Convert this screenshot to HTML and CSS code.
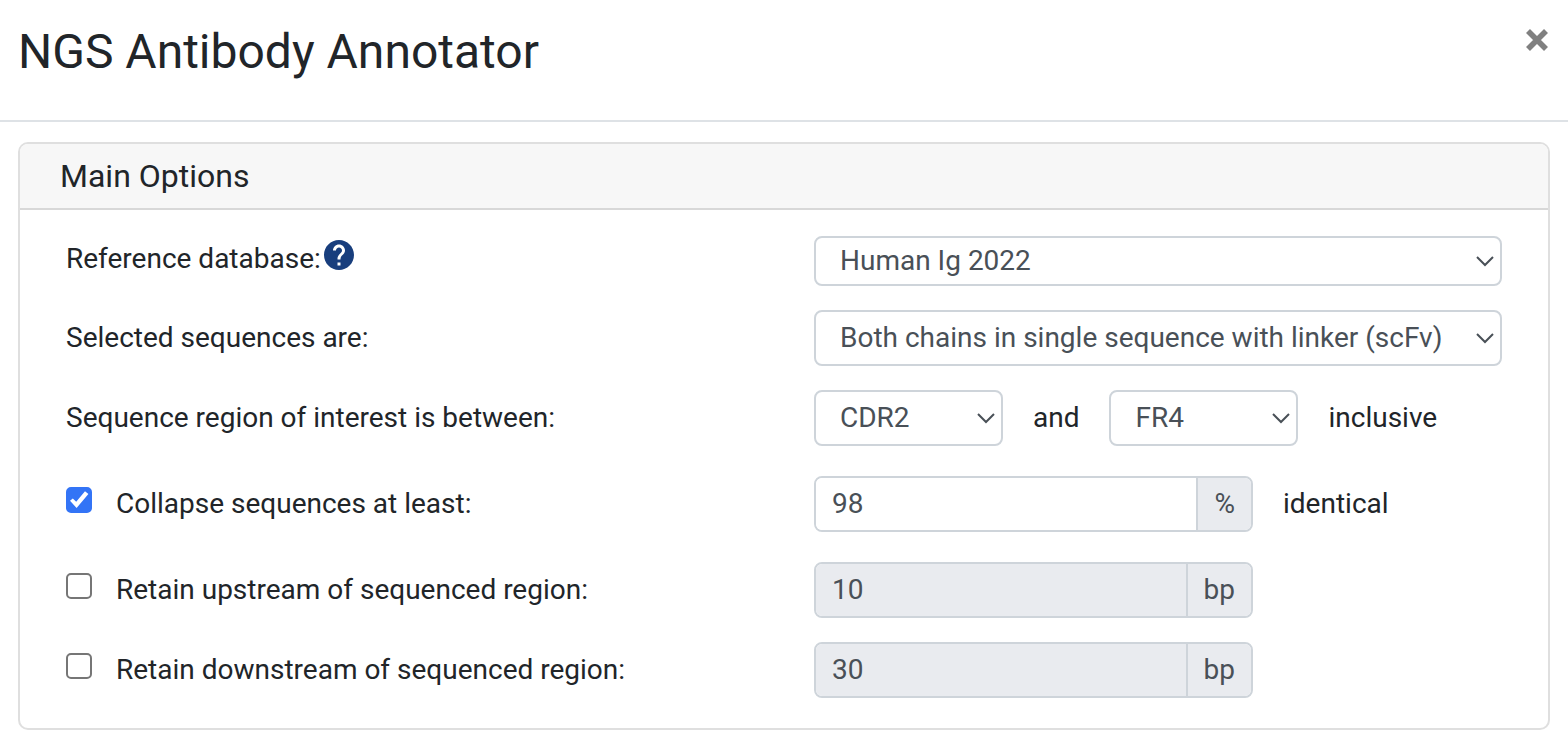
FILE: index.html
```html
<!DOCTYPE html>
<html lang="en">
<head>
    <meta charset="UTF-8">
    <meta name="viewport" content="width=device-width, initial-scale=1.0">
    <title>NGS Antibody Annotator</title>
    <link rel="stylesheet" href="styles.css">
</head>
<body>
    <header class="modal-header">
        <h1>NGS Antibody Annotator</h1>
        <button type="button" class="close" aria-label="Close">
            <svg viewBox="0 0 24 24" width="24" height="24" aria-hidden="true">
                <path d="M3 3L21 21M21 3L3 21" stroke="currentColor" stroke-width="5.6"/>
            </svg>
        </button>
    </header>

    <form class="card">
        <h2 class="card-header">Main Options</h2>
        <div class="card-body">
            <div class="form-row compact">
                <div class="label-col">
                    <label for="database">Reference database:</label>
                    <button type="button" class="help" aria-label="Help">
                        <svg viewBox="2 2 20 20" width="30" height="30" aria-hidden="true">
                            <path fill="currentColor" d="M12 2C6.48 2 2 6.48 2 12s4.48 10 10 10 10-4.480 10-10S17.520 2 12 2zm1 17h-2v-2h2v2zm2.070-7.750l-.9.920C13.450 12.900 13 13.500 13 15h-2v-.5c0-1.100.45-2.100 1.170-2.830l1.240-1.260c.37-.36.59-.86.59-1.410 0-1.100-.9-2-2-2s-2 .9-2 2H8c0-2.210 1.790-4 4-4s4 1.790 4 4c0 .88-.36 1.680-.93 2.250z"/>
                        </svg>
                    </button>
                </div>
                <div class="select-wrap">
                    <select id="database">
                        <option>Human Ig 2022</option>
                    </select>
                    <svg class="chevron" viewBox="0 0 18 11" aria-hidden="true"><path d="M1 1L9 9L17 1"/></svg>
                </div>
            </div>

            <div class="form-row">
                <label for="chains">Selected sequences are:</label>
                <div class="select-wrap">
                    <select id="chains">
                        <option>Both chains in single sequence with linker (scFv)</option>
                    </select>
                    <svg class="chevron" viewBox="0 0 18 11" aria-hidden="true"><path d="M1 1L9 9L17 1"/></svg>
                </div>
            </div>

            <div class="form-row">
                <label for="regionStart">Sequence region of interest is between:</label>
                <div class="inline-fields">
                    <div class="select-wrap short">
                        <select id="regionStart">
                            <option>CDR2</option>
                        </select>
                        <svg class="chevron" viewBox="0 0 18 11" aria-hidden="true"><path d="M1 1L9 9L17 1"/></svg>
                    </div>
                    <label for="regionEnd">and</label>
                    <div class="select-wrap short">
                        <select id="regionEnd">
                            <option>FR4</option>
                        </select>
                        <svg class="chevron" viewBox="0 0 18 11" aria-hidden="true"><path d="M1 1L9 9L17 1"/></svg>
                    </div>
                    <span>inclusive</span>
                </div>
            </div>

            <div class="form-row spaced">
                <div class="check-col">
                    <input type="checkbox" id="collapse" checked>
                    <label for="collapse">Collapse sequences at least:</label>
                </div>
                <div class="inline-fields">
                    <div class="input-group">
                        <input type="text" value="98" aria-label="Percent identical">
                        <span class="unit">%</span>
                    </div>
                    <span>identical</span>
                </div>
            </div>

            <div class="form-row spaced">
                <div class="check-col">
                    <input type="checkbox" id="upstream">
                    <label for="upstream">Retain upstream of sequenced region:</label>
                </div>
                <div class="input-group">
                    <input type="text" value="10" aria-label="Upstream bp" disabled>
                    <span class="unit">bp</span>
                </div>
            </div>

            <div class="form-row">
                <div class="check-col">
                    <input type="checkbox" id="downstream">
                    <label for="downstream">Retain downstream of sequenced region:</label>
                </div>
                <div class="input-group">
                    <input type="text" value="30" aria-label="Downstream bp" disabled>
                    <span class="unit">bp</span>
                </div>
            </div>
        </div>
    </form>
</body>
</html>
```
FILE: styles.css
```css
* {
    box-sizing: border-box;
}
body {
    margin: 0;
    background: #fff;
    color: #212529;
    font-family: Roboto, sans-serif;
    font-size: 28px;
    line-height: 42px;
}
h1, h2 {
    margin: 0;
    font-weight: 400;
}
button {
    padding: 0;
    border: none;
    background: none;
    cursor: pointer;
}
svg {
    display: block;
}
.modal-header {
    display: flex;
    justify-content: space-between;
    align-items: flex-start;
    padding: 16px 19px 32px 18px;
    border-bottom: 2px solid #dee2e6;
}
h1 {
    font-size: 48px;
    line-height: 72px;
}
.close {
    margin-top: 12px;
    color: #808080;
}
.card {
    margin: 20px 18px 10px;
    border: 2px solid #dfdfdf;
    border-radius: 10px;
    overflow: hidden;
}
.card-header {
    padding: 8px 40px;
    background: #f7f7f7;
    border-bottom: 2px solid #d8d8d8;
    font-size: 32px;
    line-height: 48px;
}
.card-body {
    padding: 26px 46px 30px;
}
.form-row {
    display: grid;
    grid-template-columns: 1fr 1fr;
    column-gap: 60px;
    align-items: center;
}
.form-row + .form-row {
    margin-top: 24px;
}
.form-row + .spaced {
    margin-top: 30px;
}
.label-col {
    display: flex;
    align-self: start;
    gap: 3px;
    line-height: 46px;
}
.help {
    margin-top: 4px;
    height: 30px;
    color: #183e7d;
}
.check-col {
    display: flex;
    gap: 24px;
}
.check-col input {
    appearance: none;
    display: grid;
    place-items: center;
    width: 26px;
    height: 26px;
    margin: 4px 0 0;
    border: 2px solid #767676;
    border-radius: 5px;
    background: #fff;
}
.check-col input:checked {
    border-color: #3374f6;
    background: #3374f6;
}
.check-col input:checked::before {
    content: "";
    width: 20px;
    height: 18px;
    background: #fff;
    clip-path: polygon(5% 54%, 19% 41%, 36% 60%, 80% 2%, 97% 16%, 38% 94%);
}
.select-wrap {
    position: relative;
}
.short {
    width: 189px;
}
select {
    appearance: none;
    display: block;
    width: 100%;
    height: 56px;
    padding: 0 48px 0 24px;
    border: 2px solid #ced4da;
    border-radius: 8px;
    background: #fff;
    color: #495057;
    font: inherit;
}
.compact select {
    height: 50px;
}
.chevron {
    position: absolute;
    right: 8px;
    top: 50%;
    width: 18px;
    height: 11px;
    margin-top: -5px;
    fill: none;
    stroke: #495057;
    stroke-width: 2;
    pointer-events: none;
}
.inline-fields {
    display: flex;
    align-items: center;
    gap: 30px;
}
.input-group {
    display: flex;
    width: 439px;
    height: 56px;
    border: 2px solid #ced4da;
    border-radius: 8px;
    overflow: hidden;
    color: #495057;
}
.input-group input {
    flex: 1;
    min-width: 0;
    padding: 0 16px;
    border: none;
    background: #fff;
    color: #495057;
    font: inherit;
}
.input-group input:disabled {
    background: #e9ebef;
}
.unit {
    padding: 5px 16px;
    border-left: 2px solid #ced4da;
    background: #e9ebef;
}
```
